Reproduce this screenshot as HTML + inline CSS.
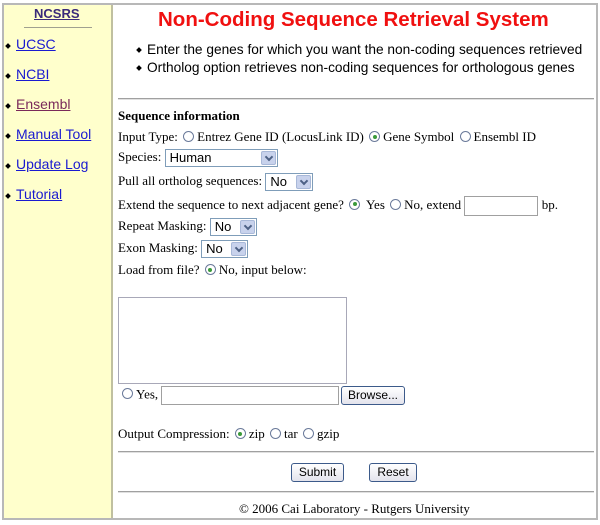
<!DOCTYPE html>
<html><head><style>
*{margin:0;padding:0;box-sizing:border-box}
body{width:600px;height:525px;background:#fff;position:relative;overflow:hidden;font-family:"Liberation Serif",serif;font-size:13px;color:#000}
.a{position:absolute;white-space:nowrap}
.s{font-family:"Liberation Sans",sans-serif}
.lnk{font-family:"Liberation Sans",sans-serif;font-size:14px;color:#1a1ad0;text-decoration:underline}
.dot{display:inline-block;width:4px;height:4px;background:#000;transform:rotate(45deg);margin-right:6px;vertical-align:middle}
.r{display:inline-block;width:11px;height:11px;border:1px solid #6a7a9a;border-radius:50%;vertical-align:-1px;margin:0 3px 0 2px;background:#fff;position:relative}
.r.on::after{content:"";position:absolute;left:2.5px;top:2.5px;width:4px;height:4px;border-radius:50%;background:#3a9a3a}
.sel{display:inline-block;height:18px;border:1px solid #7f9db9;background:#fff;font-family:"Liberation Sans",sans-serif;font-size:13px;line-height:16px;padding-left:4px;vertical-align:middle;position:relative}
.sel i{position:absolute;right:1px;top:1px;width:15px;height:14px;background:#c8d2ec;border:1px solid #a8b8d8;border-radius:2px}
.sel i::after{content:"";position:absolute;left:4px;top:2px;width:4px;height:4px;border-right:2px solid #4d6185;border-bottom:2px solid #4d6185;transform:rotate(45deg)}
.btn{position:absolute;height:19px;border:1px solid #3c5a8a;border-radius:3px;background:linear-gradient(#fff,#e3e3ec);font-family:"Liberation Sans",sans-serif;font-size:12px;text-align:center;line-height:17px}
.hr{position:absolute;left:118px;width:476px;height:2px;background:#a0a0a0;border-bottom:1px solid #e0e0e0}
</style></head><body>
<div class="a" style="left:2px;top:3px;width:596px;height:517px;border:2px solid #b8b8b8"></div>
<div class="a" style="left:4px;top:5px;width:109px;height:513px;background:#ffffcc;border-right:2px solid #c0c0a0"></div>
<div class="a s" style="left:34px;top:6px;font-weight:bold;color:#3a2a7a;font-size:13px;text-decoration:underline">NCSRS</div>
<div class="a" style="left:24px;top:27px;width:68px;height:1px;background:#a0a090"></div>
<div class="a" style="left:6px;top:36px"><span class="dot" style="margin-right:6px"></span><span class="lnk">UCSC</span></div>
<div class="a" style="left:6px;top:66px"><span class="dot" style="margin-right:6px"></span><span class="lnk">NCBI</span></div>
<div class="a" style="left:6px;top:96px"><span class="dot" style="margin-right:6px"></span><span class="lnk" style="color:#7a2a5a">Ensembl</span></div>
<div class="a" style="left:6px;top:126px"><span class="dot" style="margin-right:6px"></span><span class="lnk">Manual Tool</span></div>
<div class="a" style="left:6px;top:156px"><span class="dot" style="margin-right:6px"></span><span class="lnk">Update Log</span></div>
<div class="a" style="left:6px;top:186px"><span class="dot" style="margin-right:6px"></span><span class="lnk">Tutorial</span></div>

<div class="a s" style="left:158px;top:8px;font-size:20.5px;font-weight:bold;color:#f01010">Non-Coding Sequence Retrieval System</div>
<div class="a s" style="left:137px;top:42px;font-size:13.7px"><span class="dot"></span>Enter the genes for which you want the non-coding sequences retrieved</div>
<div class="a s" style="left:137px;top:60px;font-size:13.7px"><span class="dot"></span>Ortholog option retrieves non-coding sequences for orthologous genes</div>
<div class="hr" style="top:98px"></div>
<div class="a" style="left:118px;top:108px;font-weight:bold">Sequence information</div>
<div class="a" style="left:118px;top:129px">Input Type: <span class="r"></span>Entrez Gene ID (LocusLink ID) <span class="r on"></span>Gene Symbol <span class="r"></span>Ensembl ID</div>
<div class="a" style="left:118px;top:149px">Species: <span class="sel" style="width:113px">Human<i></i></span></div>
<div class="a" style="left:118px;top:173px">Pull all ortholog sequences: <span class="sel" style="width:48px">No<i></i></span></div>
<div class="a" style="left:118px;top:196px">Extend the sequence to next adjacent gene? <span class="r on"></span> Yes <span class="r"></span>No, extend <span style="display:inline-block;width:74px;height:20px;border:1px solid #a0a0a0;vertical-align:middle"></span> bp.</div>
<div class="a" style="left:118px;top:218px">Repeat Masking: <span class="sel" style="width:47px">No<i></i></span></div>
<div class="a" style="left:118px;top:240px">Exon Masking: <span class="sel" style="width:47px">No<i></i></span></div>
<div class="a" style="left:118px;top:262px">Load from file? <span class="r on"></span>No, input below:</div>
<div class="a" style="left:118px;top:297px;width:229px;height:87px;border:1px solid #a8a8b8"></div>
<div class="a" style="left:120px;top:386px"><span class="r"></span>Yes, <span style="display:inline-block;width:178px;height:19px;border:1px solid #a0a0a0;vertical-align:middle"></span></div>
<div class="btn" style="left:341px;top:386px;width:64px">Browse...</div>
<div class="a" style="left:118px;top:426px">Output Compression: <span class="r on"></span>zip <span class="r"></span>tar <span class="r"></span>gzip</div>
<div class="hr" style="top:451px"></div>
<div class="btn" style="left:291px;top:463px;width:53px">Submit</div>
<div class="btn" style="left:369px;top:463px;width:48px">Reset</div>
<div class="hr" style="top:491px"></div>
<div class="a" style="left:239px;top:501px">© 2006 Cai Laboratory - Rutgers University</div>
</body></html>
